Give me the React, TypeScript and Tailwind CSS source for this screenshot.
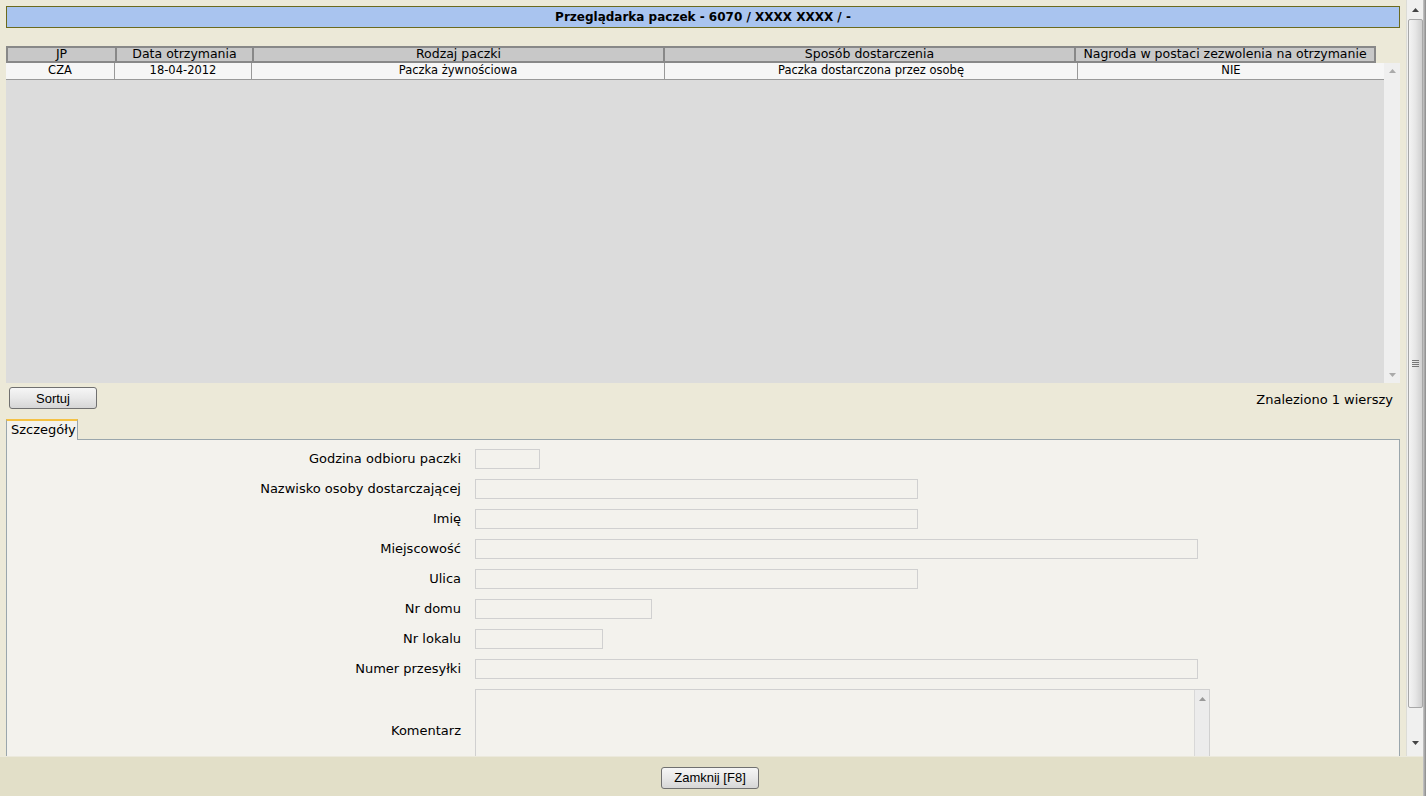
import React from "react";

const font = { fontFamily: '"DejaVu Sans", Verdana, sans-serif' };

const columns = [
  { title: "JP", width: "w-[109px]" },
  { title: "Data otrzymania", width: "w-[137px]" },
  { title: "Rodzaj paczki", width: "w-[411px]" },
  { title: "Sposób dostarczenia", width: "w-[411px]" },
  { title: "Nagroda w postaci zezwolenia na otrzymanie", width: "w-[302px]" },
];

const cellWidths = ["w-[109px]", "w-[137px]", "w-[413px]", "w-[413px]"];

const row = ["CZA", "18-04-2012", "Paczka żywnościowa", "Paczka dostarczona przez osobę", "NIE"];

const fields = [
  { label: "Godzina odbioru paczki", width: "w-[65px]" },
  { label: "Nazwisko osoby dostarczającej", width: "w-[443px]" },
  { label: "Imię", width: "w-[443px]" },
  { label: "Miejscowość", width: "w-[723px]" },
  { label: "Ulica", width: "w-[443px]" },
  { label: "Nr domu", width: "w-[177px]" },
  { label: "Nr lokalu", width: "w-[128px]" },
  { label: "Numer przesyłki", width: "w-[723px]" },
];

function Arrow({ up, className }: { up?: boolean; className?: string }) {
  return (
    <svg width="7" height="4" viewBox="0 0 7 4" className={className}>
      <path d={up ? "M0 4 L3.5 0 L7 4 Z" : "M0 0 L7 0 L3.5 4 Z"} fill="currentColor" />
    </svg>
  );
}

function PageScrollbar() {
  return (
    <div className="w-[17px] h-full bg-[#f0f0ef] border-l border-[#dcdcd6] flex flex-col items-center">
      <div className="h-[19px] flex items-center justify-center text-[#444]">
        <Arrow up />
      </div>
      <div className="w-[15px] h-[689px] rounded-[2px] border border-[#a8a8a8] bg-gradient-to-r from-[#f4f4f4] via-[#e6e6e6] to-[#cfcfcf] flex items-center justify-center">
        <div className="flex flex-col gap-[1px]">
          <div className="w-[7px] h-px bg-[#777]" />
          <div className="w-[7px] h-px bg-[#777]" />
          <div className="w-[7px] h-px bg-[#777]" />
          <div className="w-[7px] h-px bg-[#777]" />
        </div>
      </div>
      <div className="flex-1" />
      <div className="h-[22px] flex items-start pt-[7px] justify-center text-[#444]">
        <Arrow />
      </div>
    </div>
  );
}

function Button({ children, className }: { children: React.ReactNode; className?: string }) {
  return (
    <button
      className={`h-[22px] rounded-[3px] border border-[#707070] bg-gradient-to-b from-[#f6f6f6] via-[#e8e8e8] to-[#d6d6d6] text-[13px] text-black ${className ?? ""}`}
      style={{ fontFamily: '"Liberation Sans", Arial, sans-serif' }}
    >
      {children}
    </button>
  );
}

export default function App() {
  return (
    <div className="w-[1426px] h-[796px] flex bg-[#ece9d8] overflow-hidden text-black" style={font}>
      <div className="flex-1 flex flex-col">
        <div className="h-[756px] flex">
          <div className="flex-1 overflow-hidden pl-[6px] pr-[6px] pt-[6px]">
            {/* title */}
            <div className="h-[22px] border border-[#6b6a1e] bg-[#a9c4ef] flex items-center justify-center text-[12px] font-bold">
              Przeglądarka paczek - 6070 / XXXX XXXX / -
            </div>

            {/* grid */}
            <div className="mt-[18px] bg-[#dcdcdc] h-[337px] flex flex-col">
              <div className="flex h-[17px] bg-[#ece9d8]">
                {columns.map((c, i) => (
                  <div
                    key={c.title}
                    className={`${c.width} shrink-0 border-y-2 border-l-2 ${i === columns.length - 1 ? "border-r-2" : ""} border-[#888] bg-[#c8c8c8] flex items-center justify-center text-[12.5px] leading-none`}
                  >
                    {c.title}
                  </div>
                ))}
              </div>
              <div className="flex flex-1 min-h-0">
                <div className="flex-1">
                  <div className="flex h-[17px] bg-[#f6f6f6] border-b border-[#999]">
                    {row.map((v, i) => (
                      <div
                        key={i}
                        className={`${i === 4 ? "flex-1" : cellWidths[i]} shrink-0 border-r border-[#999] last:border-r-0 flex items-center justify-center text-[11.5px] leading-none`}
                      >
                        {v}
                      </div>
                    ))}
                  </div>
                </div>
                <div className="w-[16px] bg-[#efefef] flex flex-col items-center justify-between py-[6px] text-[#aaa]">
                  <Arrow up />
                  <Arrow />
                </div>
              </div>
            </div>

            {/* sort row */}
            <div className="flex items-center justify-between mt-[4px] pl-[3px] pr-[7px]">
              <Button className="w-[88px]">Sortuj</Button>
              <span className="text-[13px] mt-[3px]">Znaleziono 1 wierszy</span>
            </div>

            {/* tab */}
            <div className="mt-[9px] flex">
              <div className="w-[72px] h-[21px] border-t-2 border-[#f5c142] border-x border-x-[#9aa6ac] bg-[#f3f2ed] flex items-center px-[4px] text-[13px] relative -mb-px z-10">
                Szczegóły
              </div>
            </div>
            <div className="border border-[#9aa6ac] bg-[#f3f2ed] h-[330px] pt-[9px]">
              <div className="flex flex-col gap-[10px]">
                {fields.map((f) => (
                  <div key={f.label} className="flex items-center">
                    <div className="w-[454px] text-right text-[13px]">{f.label}</div>
                    <div className={`ml-[14px] ${f.width} h-[20px] border border-[#d0d0d0] bg-[#f3f2ed]`} />
                  </div>
                ))}
                <div className="flex items-center">
                  <div className="w-[454px] text-right text-[13px]">Komentarz</div>
                  <div className="ml-[14px] w-[735px] h-[84px] border border-[#d0d0d0] bg-[#f3f2ed] flex justify-end">
                    <div className="w-[15px] bg-[#ececec] border-l border-[#d8d8d8] flex justify-center pt-[7px] text-[#999]">
                      <Arrow up />
                    </div>
                  </div>
                </div>
              </div>
            </div>
          </div>
          <PageScrollbar />
        </div>
        <div className="h-[40px] bg-[#e2dfc8] border-t border-[#ebe9dc] flex items-center justify-center pr-[3px]">
          <Button className="w-[98px] mt-[2px]">Zamknij [F8]</Button>
        </div>
      </div>
      <div className="w-[3px] bg-gradient-to-r from-[#c8c8c8] to-[#8a8a8a]" />
    </div>
  );
}
